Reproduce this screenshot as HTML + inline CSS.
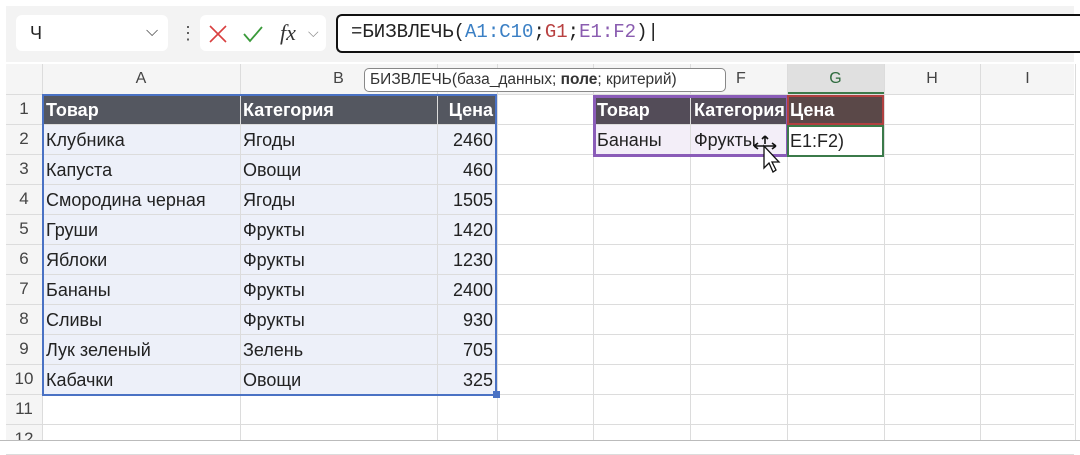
<!DOCTYPE html>
<html><head><meta charset="utf-8"><style>
body{margin:0;width:1080px;height:452px;overflow:hidden;background:#fff;font-family:"Liberation Sans",sans-serif;position:relative}
.a{position:absolute}
.bar{left:6px;top:6px;width:1068px;height:56px;background:#f3f3f3}
.grid{left:6px;top:62px;width:1068px;height:372px;background:#fff}
.hl{position:absolute;height:1px;background:#dcdcdc}
.vl{position:absolute;width:1px;background:#dcdcdc}
.t{position:absolute;font-size:18px;color:#222;white-space:nowrap;line-height:30px}
.h{color:#fff;font-weight:bold}
.hd{position:absolute;font-size:16px;color:#444;text-align:center;line-height:28px}
.mono{font-family:"Liberation Mono",monospace}
</style></head><body>
<div class="a bar"></div>
<!-- name box -->
<div class="a" style="left:16px;top:15px;width:152px;height:36px;background:#fff;border-radius:6px"></div>
<div class="t" style="left:30px;top:18px">Ч</div>
<div class="t" style="left:146px;top:17px;color:#444;font-size:16px">⌵</div>
<div class="t" style="left:179px;top:18px;color:#555">⋮</div>
<div class="a" style="left:200px;top:15px;width:126px;height:36px;background:#fff;border-radius:6px"></div>
<svg class="a" style="left:208px;top:24px" width="60" height="20"><path d="M2 2L18 18M18 2L2 18" stroke="#d94040" stroke-width="1.6" fill="none"/><path d="M36 10L42 17L54 3" stroke="#3a9a3a" stroke-width="1.8" fill="none"/></svg>
<div class="t" style="left:280px;top:18px;font-family:'Liberation Serif',serif;font-style:italic;font-size:22px;color:#333">fx</div>
<div class="t" style="left:308px;top:17px;color:#888;font-size:14px">⌵</div>
<div class="a" style="left:336px;top:14px;width:744px;height:35px;background:#fff;border:2px solid #111;border-right:none;border-radius:6px 0 0 6px"></div>
<div class="t mono" style="left:351px;top:17px;font-size:19px">=БИЗВЛЕЧЬ(<span style="color:#3a7fc4">A1:C10</span>;<span style="color:#b84040">G1</span>;<span style="color:#8a5cb0">E1:F2</span>)|</div>
<!-- grid -->
<div class="a grid"></div>
<div class="a" style="left:6px;top:64px;width:1068px;height:30px;background:#f5f5f5"></div>
<div class="a" style="left:6px;top:94px;width:36px;height:346px;background:#f5f5f5"></div>
<div class="a" style="left:787px;top:64px;width:97px;height:30px;background:#e0e0e0;border-bottom:2px solid #3b7a4a;box-sizing:border-box"></div>
<div class="a" style="left:42px;top:95px;width:455px;height:30px;background:#545760"></div>
<div class="a" style="left:42px;top:125px;width:455px;height:270px;background:#edf0f9"></div>
<div class="a" style="left:593px;top:95px;width:194px;height:30px;background:#534c58"></div>
<div class="a" style="left:787px;top:95px;width:97px;height:30px;background:#5a4848"></div>
<div class="a" style="left:593px;top:125px;width:194px;height:30px;background:#f3eef8"></div>
<div id="lines"></div>
<div class="hd" style="left:42px;top:65px;width:198px">A</div>
<div class="hd" style="left:240px;top:65px;width:197px">B</div>
<div class="hd" style="left:690px;top:65px;width:97px;text-align:left;padding-left:46px;box-sizing:border-box">F</div>
<div class="hd" style="left:787px;top:65px;width:97px;color:#2e6b3e">G</div>
<div class="hd" style="left:884px;top:65px;width:96px">H</div>
<div class="hd" style="left:980px;top:65px;width:95px">I</div>
<div id="cells"></div>
<!-- selections -->
<div class="a" style="left:42px;top:94px;width:455px;height:302px;border:2px solid #4a72c4;box-sizing:border-box"></div>
<div class="a" style="left:493px;top:391px;width:7px;height:7px;background:#4a72c4"></div>
<div class="a" style="left:593px;top:95px;width:196px;height:62px;border:3px solid #8a5cb8;box-sizing:border-box"></div>
<div class="a" style="left:787px;top:95px;width:97px;height:30px;border:2px solid #b04040;box-sizing:border-box"></div>
<div class="a" style="left:787px;top:125px;width:97px;height:32px;border:2px solid #3b7a4a;box-sizing:border-box;background:#fff"></div>
<div class="t" style="left:790px;top:126px">E1:F2)</div>
<svg class="a" style="left:750px;top:134px" width="34" height="42"><path d="M4 12H26M4 12l4-3M4 12l4 3M26 12l-4-3M26 12l-4 3M15 2v8M15 2l-3 3M15 2l3 3" stroke="#111" stroke-width="1.6" fill="none"/><path d="M14 12L14 34L19 29L23 38L26 36L22 28L29 28Z" fill="#fff" stroke="#111" stroke-width="1.3"/></svg>
<!-- tooltip -->
<div class="a" style="left:364px;top:68px;width:362px;height:24px;background:#fff;border:1px solid #888;border-radius:5px;box-sizing:border-box"></div>
<div class="t" style="left:370px;top:65px;font-size:15.5px;color:#333">БИЗВЛЕЧЬ(база_данных; <b>поле</b>; критерий)</div>
<div class="a" style="left:0;top:440px;width:1080px;height:12px;background:#fff;border-top:1px solid #bbb"></div>
<script>
var L=document.getElementById('lines'),s='';
var xs=[42,240,437,497,593,690,787,884,980,1075];
xs.forEach(function(x){s+='<div class="vl" style="left:'+x+'px;top:64px;height:376px"></div>'});
for(var i=0;i<13;i++){var y=94+i*30;s+='<div class="hl" style="left:6px;top:'+y+'px;width:1068px"></div>';if(i<12)s+='<div class="hd" style="left:6px;top:'+(y+1)+'px;width:36px;font-size:17px">'+(i+1)+'</div>'}
L.innerHTML=s;
var d=[["Товар","Категория","Цена"],["Клубника","Ягоды",2460],["Капуста","Овощи",460],["Смородина черная","Ягоды",1505],["Груши","Фрукты",1420],["Яблоки","Фрукты",1230],["Бананы","Фрукты",2400],["Сливы","Фрукты",930],["Лук зеленый","Зелень",705],["Кабачки","Овощи",325]];
var c='';d.forEach(function(r,i){var y=95+i*30,h=i==0?' h':'';
c+='<div class="t'+h+'" style="left:46px;top:'+y+'px">'+r[0]+'</div><div class="t'+h+'" style="left:243px;top:'+y+'px">'+r[1]+'</div><div class="t'+h+'" style="right:587px;top:'+y+'px">'+r[2]+'</div>'});
c+='<div class="t h" style="left:597px;top:95px">Товар</div><div class="t h" style="left:694px;top:95px;width:92px;overflow:hidden">Категория</div><div class="t h" style="left:790px;top:95px">Цена</div>';
c+='<div class="t" style="left:597px;top:125px">Бананы</div><div class="t" style="left:694px;top:125px">Фрукты</div>';
document.getElementById('cells').innerHTML=c;
</script>
</body></html>
